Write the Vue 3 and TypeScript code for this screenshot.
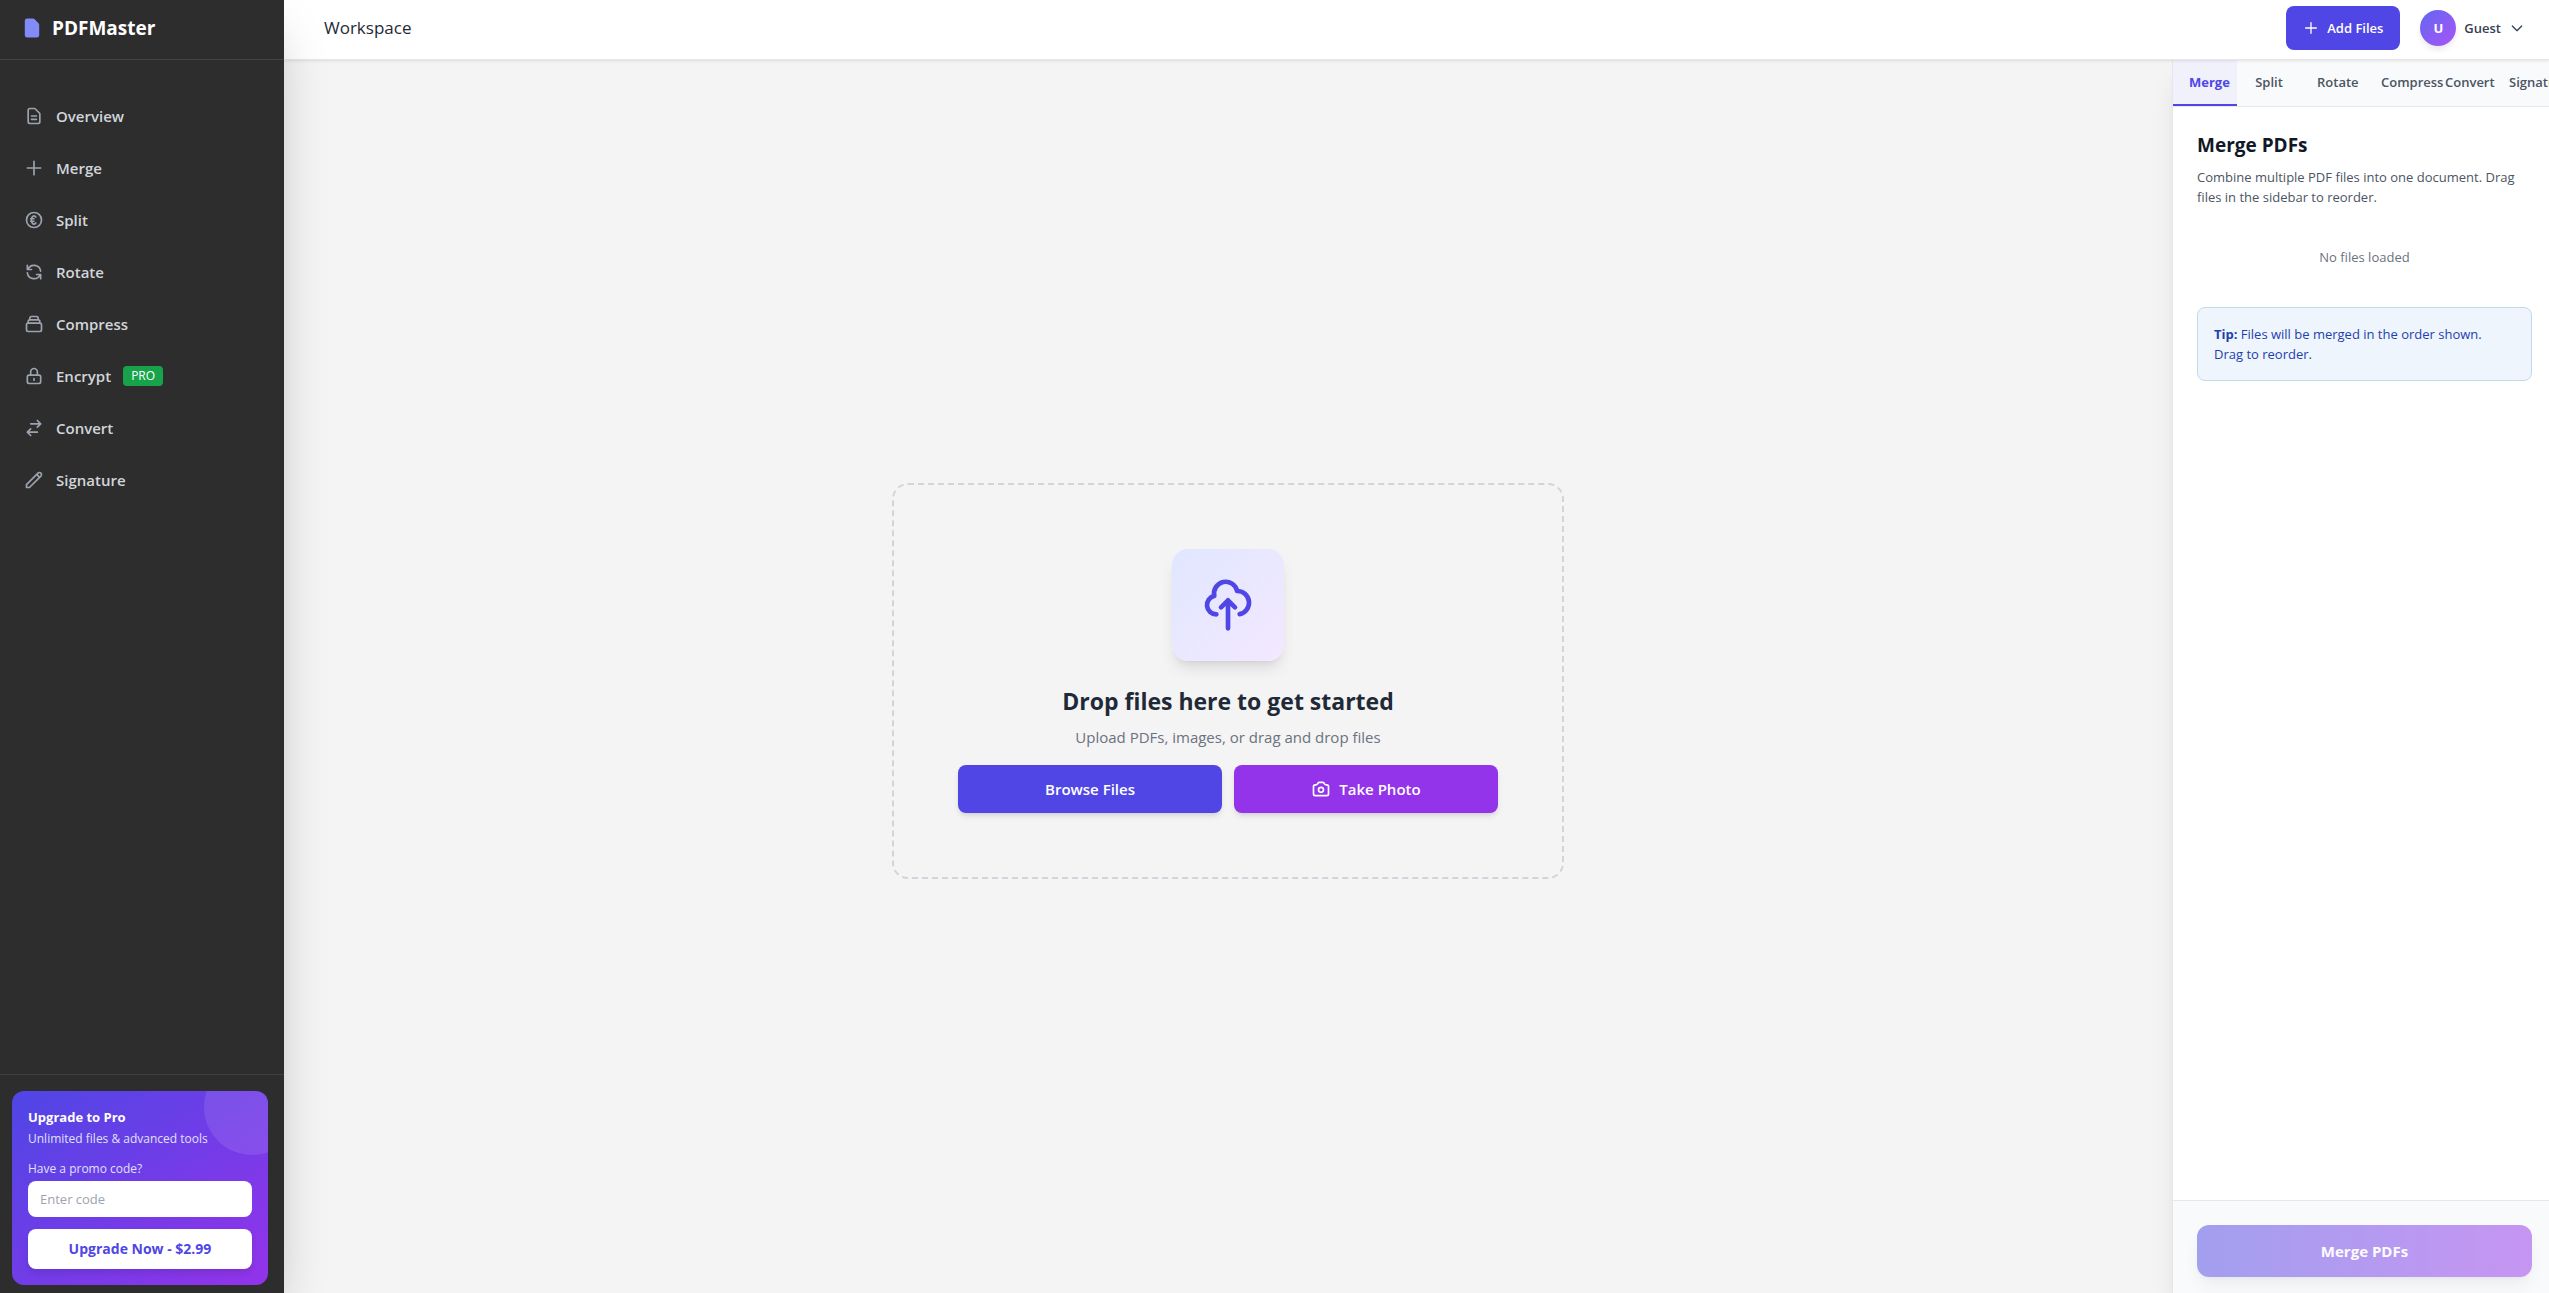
<script setup lang="ts">
import { ref } from 'vue'

interface NavItem {
  label: string
  path: string
  pro?: boolean
}

const navItems: NavItem[] = [
  { label: 'Overview', path: 'M9 12h6m-6 4h6m2 5H7a2 2 0 01-2-2V5a2 2 0 012-2h5.586a1 1 0 01.707.293l5.414 5.414a1 1 0 01.293.707V19a2 2 0 01-2 2z' },
  { label: 'Merge', path: 'M12 4v16m8-8H4' },
  { label: 'Split', path: 'M14.121 15.536c-1.171 1.952-3.07 1.952-4.242 0-1.172-1.953-1.172-5.119 0-7.072 1.171-1.952 3.07-1.952 4.242 0M8 10.5h4m-4 3h4m9-1.5a9 9 0 11-18 0 9 9 0 0118 0z' },
  { label: 'Rotate', path: 'M4 4v5h.582m15.356 2A8.001 8.001 0 004.582 9m0 0H9m11 11v-5h-.581m0 0a8.003 8.003 0 01-15.357-2m15.357 2H15' },
  { label: 'Compress', path: 'M19 11H5m14 0a2 2 0 012 2v6a2 2 0 01-2 2H5a2 2 0 01-2-2v-6a2 2 0 012-2m14 0V9a2 2 0 00-2-2M5 11V9a2 2 0 012-2m0 0V5a2 2 0 012-2h6a2 2 0 012 2v2M7 7h10' },
  { label: 'Encrypt', path: 'M12 15v2m-6 4h12a2 2 0 002-2v-6a2 2 0 00-2-2H6a2 2 0 00-2 2v6a2 2 0 002 2zm10-10V7a4 4 0 00-8 0v4h8z', pro: true },
  { label: 'Convert', path: 'M8 7h12m0 0l-4-4m4 4l-4 4m0 6H4m0 0l4 4m-4-4l4-4' },
  { label: 'Signature', path: 'M15.232 5.232l3.536 3.536m-2.036-5.036a2.5 2.5 0 113.536 3.536L6.5 21.036H3v-3.572L16.732 3.732z' },
]

const tabs = ['Merge', 'Split', 'Rotate', 'Compress', 'Convert', 'Signature']
const activeTab = ref('Merge')
const promoCode = ref('')
</script>

<template>
  <div class="app">
    <aside class="sidebar">
      <div class="brand">
        <svg class="brand-icon" viewBox="0 0 20 20" fill="currentColor" aria-hidden="true">
          <path d="M4 4a2 2 0 012-2h4.586A2 2 0 0112 2.586L15.414 6A2 2 0 0116 7.414V16a2 2 0 01-2 2H6a2 2 0 01-2-2V4z" />
        </svg>
        <span>PDFMaster</span>
      </div>
      <nav class="nav">
        <a v-for="item in navItems" :key="item.label" href="#" class="nav-link">
          <svg class="icon" viewBox="0 0 24 24" aria-hidden="true"><path :d="item.path" /></svg>
          <span>{{ item.label }}</span>
          <span v-if="item.pro" class="badge">PRO</span>
        </a>
      </nav>
      <div class="promo-wrap">
        <section class="promo">
          <h2>Upgrade to Pro</h2>
          <p>Unlimited files &amp; advanced tools</p>
          <label for="promo-code">Have a promo code?</label>
          <input id="promo-code" v-model="promoCode" type="text" placeholder="Enter code" />
          <button type="button">Upgrade Now - $2.99</button>
        </section>
      </div>
    </aside>

    <div class="main">
      <header class="topbar">
        <h1>Workspace</h1>
        <div class="actions">
          <button type="button" class="add">
            <svg viewBox="0 0 24 24" aria-hidden="true"><path d="M12 4v16m8-8H4" /></svg>
            <span>Add Files</span>
          </button>
          <button type="button" class="user">
            <span class="avatar">U</span>
            <span>Guest</span>
            <svg viewBox="0 0 24 24" aria-hidden="true"><path d="M19 9l-7 7-7-7" /></svg>
          </button>
        </div>
      </header>

      <div class="content">
        <main class="workspace">
          <section class="dropzone">
            <div class="upload-tile">
              <svg viewBox="0 0 24 24" aria-hidden="true">
                <path d="M7 16a4 4 0 01-.88-7.903A5 5 0 1115.9 6L16 6a5 5 0 011 9.9M15 13l-3-3m0 0l-3 3m3-3v12" />
              </svg>
            </div>
            <h2>Drop files here to get started</h2>
            <p>Upload PDFs, images, or drag and drop files</p>
            <div class="drop-actions">
              <button type="button" class="browse">Browse Files</button>
              <button type="button" class="photo">
                <svg class="icon" viewBox="0 0 24 24" aria-hidden="true">
                  <path d="M3 9a2 2 0 012-2h.93a2 2 0 001.664-.89l.812-1.22A2 2 0 0110.07 4h3.86a2 2 0 011.664.89l.812 1.22A2 2 0 0018.07 7H19a2 2 0 012 2v9a2 2 0 01-2 2H5a2 2 0 01-2-2V9z" />
                  <path d="M15 13a3 3 0 11-6 0 3 3 0 016 0z" />
                </svg>
                <span>Take Photo</span>
              </button>
            </div>
          </section>
        </main>

        <aside class="panel">
          <div class="tabs" role="tablist">
            <button
              v-for="tab in tabs"
              :key="tab"
              type="button"
              role="tab"
              :aria-selected="tab === activeTab"
              :class="['tab', { active: tab === activeTab }]"
              @click="activeTab = tab"
            >{{ tab }}</button>
          </div>
          <div class="panel-body">
            <h2>Merge PDFs</h2>
            <p class="desc">Combine multiple PDF files into one document. Drag files in the sidebar to reorder.</p>
            <p class="empty">No files loaded</p>
            <p class="tip"><strong>Tip:</strong> Files will be merged in the order shown. Drag&nbsp;to&nbsp;reorder.</p>
          </div>
          <footer class="panel-footer">
            <button type="button" disabled>Merge PDFs</button>
          </footer>
        </aside>
      </div>
    </div>
  </div>
</template>

<style>
body {
  margin: 0;
}
</style>

<style scoped>
.app,
.app * {
  box-sizing: border-box;
}

.app {
  display: flex;
  height: 100vh;
  overflow: hidden;
  font-family: "Open Sans", "Noto Sans", sans-serif;
  font-size: 13px;
  line-height: 20px;
  color: #1f2937;
  background: #f4f4f4;
}

h1,
h2,
p {
  margin: 0;
}

button,
input {
  font: inherit;
  border: 0;
}

button {
  display: flex;
  align-items: center;
  justify-content: center;
  padding: 0;
  cursor: pointer;
}

svg {
  flex: none;
  fill: none;
  stroke: currentColor;
  stroke-width: 2;
  stroke-linecap: round;
  stroke-linejoin: round;
}

.icon {
  width: 20px;
  height: 20px;
}

/* Sidebar */
.sidebar {
  position: relative;
  z-index: 2;
  display: flex;
  flex: none;
  flex-direction: column;
  width: 284px;
  background: #2d2d2d;
  box-shadow: 0 25px 50px -12px rgba(0, 0, 0, 0.25);
}

.brand {
  display: flex;
  align-items: center;
  gap: 8px;
  height: 60px;
  padding: 0 20px 4px;
  border-bottom: 1px solid #41444c;
  font-size: 19px;
  font-weight: 700;
  color: #fff;
}

.brand-icon {
  width: 24px;
  height: 24px;
  fill: #818cf8;
  stroke: none;
}

.nav {
  display: flex;
  flex: 1;
  flex-direction: column;
  gap: 4px;
  padding: 32px 12px;
}

.nav-link {
  display: flex;
  align-items: center;
  gap: 12px;
  height: 48px;
  padding: 0 12px;
  font-size: 15px;
  font-weight: 600;
  color: #d1d5db;
  text-decoration: none;
}

.nav-link .icon {
  color: #9ca3af;
}

.badge {
  padding: 2px 8px;
  border-radius: 4px;
  background: #16a34a;
  font-size: 12px;
  font-weight: 400;
  line-height: 16px;
  color: #fff;
}

.promo-wrap {
  padding: 16px 16px 8px 12px;
  border-top: 1px solid #3b3f46;
}

.promo {
  position: relative;
  display: flex;
  flex-direction: column;
  padding: 16px;
  overflow: hidden;
  border-radius: 12px;
  background: linear-gradient(to bottom right, #4f46e5, #9333ea);
  color: #e0e0fb;
  font-size: 12px;
  line-height: 16px;
}

.promo::before {
  content: "";
  position: absolute;
  top: -32px;
  right: -32px;
  width: 96px;
  height: 96px;
  border-radius: 50%;
  background: rgba(255, 255, 255, 0.1);
}

.promo h2 {
  font-size: 13px;
  font-weight: 700;
  line-height: 20px;
  color: #fff;
}

.promo p {
  margin: 4px 0 14px;
}

.promo label {
  margin-bottom: 4px;
}

.promo input {
  width: 100%;
  height: 36px;
  padding: 0 12px;
  border-radius: 8px;
  background: #fff;
  font-size: 13px;
  color: #1f2937;
}

.promo input::placeholder {
  color: #9ca3af;
}

.promo button {
  height: 40px;
  margin-top: 12px;
  border-radius: 8px;
  background: #fff;
  box-shadow: 0 4px 6px rgba(0, 0, 0, 0.1);
  font-size: 14px;
  font-weight: 700;
  color: #4f46e5;
}

/* Top bar */
.main {
  display: flex;
  flex: 1;
  flex-direction: column;
  min-width: 0;
}

.topbar {
  position: relative;
  z-index: 1;
  display: flex;
  flex: none;
  align-items: center;
  justify-content: space-between;
  height: 60px;
  padding: 0 24px 4px 40px;
  border-bottom: 1px solid #e5e7eb;
  background: #fff;
  box-shadow: 0 1px 3px rgba(0, 0, 0, 0.1);
}

.topbar h1 {
  font-size: 17px;
  font-weight: 500;
  line-height: 28px;
}

.actions {
  display: flex;
  align-items: center;
  gap: 20px;
}

.add {
  gap: 8px;
  width: 114px;
  height: 44px;
  border-radius: 8px;
  background: #4f46e5;
  font-weight: 600;
  color: #fff;
}

.actions svg {
  width: 16px;
  height: 16px;
}

.user {
  gap: 8px;
  background: none;
  font-weight: 600;
  color: #374151;
}

.avatar {
  display: flex;
  align-items: center;
  justify-content: center;
  width: 36px;
  height: 36px;
  border-radius: 50%;
  background: linear-gradient(to bottom right, #6366f1, #a855f7);
  box-shadow: 0 4px 6px -1px rgba(0, 0, 0, 0.1);
  font-weight: 700;
  color: #fff;
}

/* Workspace */
.content {
  display: flex;
  flex: 1;
  min-height: 0;
}

.workspace {
  display: flex;
  flex: 1;
  align-items: center;
  justify-content: center;
  padding-top: 9px;
}

.dropzone {
  display: flex;
  flex-direction: column;
  align-items: center;
  width: 100%;
  max-width: 672px;
  padding: 64px;
  border: 2px dashed #d1d5db;
  border-radius: 16px;
}

.upload-tile {
  display: flex;
  align-items: center;
  justify-content: center;
  width: 112px;
  height: 112px;
  border-radius: 16px;
  background: linear-gradient(to bottom right, #e0e7ff, #f3e8ff);
  box-shadow: 0 10px 15px -3px rgba(0, 0, 0, 0.1), 0 4px 6px -4px rgba(0, 0, 0, 0.1);
  color: #4f46e5;
}

.upload-tile svg {
  width: 56px;
  height: 56px;
}

.dropzone h2 {
  margin-top: 24px;
  font-size: 23px;
  font-weight: 700;
  line-height: 32px;
}

.dropzone p {
  margin: 8px 0 16px;
  font-size: 15px;
  line-height: 24px;
  color: #6b7280;
}

.drop-actions {
  display: flex;
  gap: 12px;
  width: 100%;
}

.drop-actions button {
  flex: 1;
  gap: 8px;
  height: 48px;
  border-radius: 8px;
  box-shadow: 0 4px 6px -1px rgba(0, 0, 0, 0.1), 0 2px 4px -2px rgba(0, 0, 0, 0.1);
  font-size: 15px;
  font-weight: 600;
  color: #fff;
}

.browse {
  background: #4f46e5;
}

.photo {
  background: #9333ea;
}

/* Tool panel */
.panel {
  display: flex;
  flex: none;
  flex-direction: column;
  width: 377px;
  border-left: 1px solid #e5e7eb;
  background: #fff;
  box-shadow: 0 20px 25px -5px rgba(0, 0, 0, 0.1), 0 8px 10px -6px rgba(0, 0, 0, 0.1);
}

.tabs {
  display: flex;
  flex: none;
  height: 47px;
  overflow: hidden;
  border-bottom: 1px solid #e5e7eb;
  background: #f9fafb;
}

.tab {
  display: block;
  flex: none;
  width: 64px;
  padding: 0 16px;
  border-bottom: 2px solid transparent;
  background: none;
  font-weight: 600;
  text-align: center;
  white-space: nowrap;
  color: #4b5563;
}

.tab.active {
  border-color: #4f46e5;
  background: #f1f1fb;
  font-weight: 700;
  color: #4f46e5;
}

.panel-body {
  flex: 1;
  padding: 24px 17px 24px 24px;
}

.panel-body h2 {
  font-size: 19px;
  font-weight: 700;
  line-height: 28px;
  color: #111827;
}

.desc {
  margin-top: 8px;
  color: #4b5563;
}

.empty {
  padding: 40px 0;
  text-align: center;
  color: #6b7280;
}

.tip {
  padding: 16px;
  border: 1px solid #bfdbe9;
  border-radius: 8px;
  background: #eef5fc;
  color: #1e40af;
}

.panel-footer {
  flex: none;
  padding: 24px 17px 16px 24px;
  border-top: 1px solid #e5e7eb;
  background: #f9fafb;
}

.panel-footer button {
  width: 100%;
  height: 52px;
  border-radius: 12px;
  background: linear-gradient(to right, #4f46e5, #9333ea);
  box-shadow: 0 10px 15px -3px rgba(0, 0, 0, 0.1), 0 4px 6px -4px rgba(0, 0, 0, 0.1);
  font-size: 15px;
  font-weight: 700;
  color: #fff;
  opacity: 0.5;
}
</style>
